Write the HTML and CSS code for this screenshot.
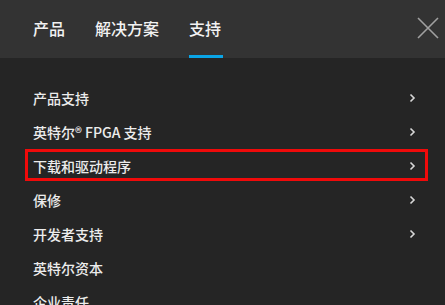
FILE: index.html
```html
<!DOCTYPE html>
<html lang="zh-CN">
<head>
<meta charset="utf-8">
<link rel="stylesheet" href="styles.css">
</head>
<body>
<header class="topbar">
  <nav class="tabs">
    <a class="tab">产品</a>
    <a class="tab">解决方案</a>
    <a class="tab active">支持</a>
  </nav>
  <button class="close" aria-label="关闭">
    <svg width="22" height="22" viewBox="0 0 22 22"><path d="M1 1 L21 21 M21 1 L1 21" stroke="#a0a0a0" stroke-width="1.6" fill="none"/></svg>
  </button>
</header>
<ul class="menu">
  <li class="row"><span>产品支持</span><svg class="chev" width="7" height="10" viewBox="0 0 7 10"><path d="M1.5 1.5 L5 5 L1.5 8.5" stroke="#d8d8d8" stroke-width="1.6" fill="none"/></svg></li>
  <li class="row"><span>英特尔® FPGA 支持</span><svg class="chev" width="7" height="10" viewBox="0 0 7 10"><path d="M1.5 1.5 L5 5 L1.5 8.5" stroke="#d8d8d8" stroke-width="1.6" fill="none"/></svg></li>
  <li class="row marked"><span>下载和驱动程序</span><svg class="chev" width="7" height="10" viewBox="0 0 7 10"><path d="M1.5 1.5 L5 5 L1.5 8.5" stroke="#d8d8d8" stroke-width="1.6" fill="none"/></svg></li>
  <li class="row"><span>保修</span><svg class="chev" width="7" height="10" viewBox="0 0 7 10"><path d="M1.5 1.5 L5 5 L1.5 8.5" stroke="#d8d8d8" stroke-width="1.6" fill="none"/></svg></li>
  <li class="row"><span>开发者支持</span><svg class="chev" width="7" height="10" viewBox="0 0 7 10"><path d="M1.5 1.5 L5 5 L1.5 8.5" stroke="#d8d8d8" stroke-width="1.6" fill="none"/></svg></li>
  <li class="row"><span>英特尔资本</span></li>
  <li class="row"><span>企业责任</span></li>
</ul>
</body>
</html>
```
FILE: styles.css
```css
html, body {
  margin: 0;
  padding: 0;
  background: #252525;
  font-family: "Noto Sans CJK SC", "Noto Sans", sans-serif;
  overflow: hidden;
}
.topbar {
  height: 58px;
  background: #333333;
  display: flex;
  align-items: center;
  justify-content: space-between;
  padding: 0 6px 0 33px;
}
.tabs {
  display: flex;
  gap: 30px;
  height: 58px;
}
.tab {
  height: 58px;
  box-sizing: border-box;
  display: flex;
  align-items: center;
  color: #f2f2f2;
  font-size: 16px;
  font-weight: 500;
  border-bottom: 3px solid transparent;
  padding-top: 1px;
}
.tab.active {
  border-bottom-color: #0aa5e6;
  padding-right: 2px;
}
.close {
  background: none;
  border: 0;
  padding: 0;
  width: 22px;
  height: 22px;
  margin-top: -3px;
  display: flex;
}
.menu {
  list-style: none;
  margin: 0;
  padding: 23px 17px 0 25px;
}
.row {
  position: relative;
  height: 34px;
  display: flex;
  align-items: center;
  justify-content: space-between;
  padding: 0 12px 0 8px;
  color: #ececec;
  font-size: 14px;
  font-weight: 500;
}
.row.marked::after {
  content: "";
  position: absolute;
  left: 0;
  right: 0;
  top: 0;
  height: 32px;
  border: 3px solid #f00a0a;
  box-sizing: border-box;
}
```
